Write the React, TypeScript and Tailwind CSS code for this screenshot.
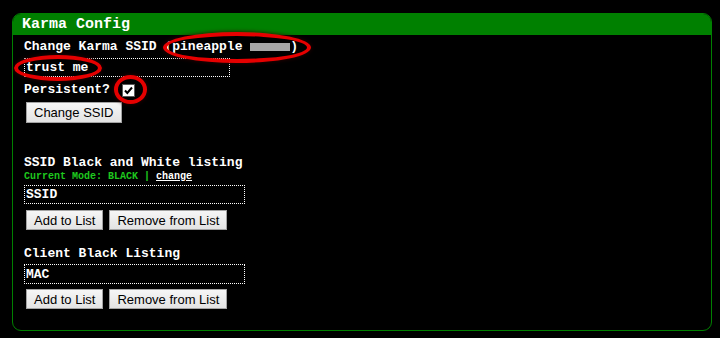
import React from "react";

const mono = "font-['Liberation_Mono','Courier_New',monospace]";
const sans = "font-['Liberation_Sans',Arial,sans-serif]";

function Btn({label}: {label: string}) {
    return (
        <button
            className={`${sans} h-full px-[7px] text-[13px] font-normal leading-none text-black bg-gradient-to-b from-[#f6f6f6] to-[#e3e3e3] border border-[#a3a3a3]`}>
            {label}
        </button>
    );
}

function Field({value, width, height}: {value: string; width: string; height: string}) {
    // dotted white box like the old firefox focus style
    return (
        <div className={`${width} ${height} border border-dotted border-white bg-black pl-[1px] flex items-center`}>
            <span className={`${mono} text-[13px] font-bold text-white leading-none`}>{value}</span>
        </div>
    );
}

export default function App() {
    return (
        <div className="relative w-[720px] h-[338px] bg-black pt-[13px] pl-[12px] overflow-hidden">
            <div className="w-[700px] h-[318px] border border-[#008000] rounded-[9px] overflow-hidden">
                <div className={`${mono} h-[21px] bg-[#008000] px-[9px] text-[15px] font-bold text-white leading-[21px]`}>
                    Karma Config
                </div>

                <div className={`${mono} pl-[11px] text-white font-bold`}>
                    <div className="mt-[4px] h-[16px] text-[13px] leading-[16px] flex items-center whitespace-pre">
                        Change Karma SSID (pineapple <span className="inline-block w-[40px] h-[8px] bg-[#a6a6a6]"/>)
                    </div>
                    <div className="mt-[3px]">
                        <Field value="trust me" width="w-[206px]" height="h-[19px]"/>
                    </div>
                    <div className="mt-[5px] h-[16px] text-[13px] leading-[16px] flex items-center gap-[12px]">
                        Persistent?
                        <span className="w-[13px] h-[13px] bg-white border border-[#5a5a5a] flex items-center justify-center">
                            <svg viewBox="0 0 11 11" className="w-[11px] h-[11px]">
                                <path d="M2 5.5 L4.3 8 L9 2.5" fill="none" stroke="#000" strokeWidth="2"/>
                            </svg>
                        </span>
                    </div>
                    <div className="mt-[4px] h-[21px] ml-[2px] flex">
                        <Btn label="Change SSID"/>
                    </div>

                    <div className="mt-[32px] h-[16px] text-[13px] leading-[16px]">SSID Black and White listing</div>
                    <div className="mt-[1px] h-[10px] text-[10px] leading-[10px] text-[#1ec81e]">
                        Current Mode: BLACK | <span className="text-white underline">change</span>
                    </div>
                    <div className="mt-[3px]">
                        <Field value="SSID" width="w-[221px]" height="h-[19px]"/>
                    </div>
                    <div className="mt-[6px] h-[20px] ml-[2px] flex gap-[6px]">
                        <Btn label="Add to List"/>
                        <Btn label="Remove from List"/>
                    </div>

                    <div className="mt-[16px] h-[16px] text-[13px] leading-[16px]">Client Black Listing</div>
                    <div className="mt-[2px]">
                        <Field value="MAC" width="w-[221px]" height="h-[20px]"/>
                    </div>
                    <div className="mt-[5px] h-[20px] ml-[2px] flex gap-[6px]">
                        <Btn label="Add to List"/>
                        <Btn label="Remove from List"/>
                    </div>
                </div>
            </div>

            {/* red annotation rings drawn over the screenshot */}
            <div className="absolute left-[163px] top-[32px] w-[148px] h-[31px] rounded-[50%] border-[4px] border-[#e60000] shadow-[0_0_4px_#300]"/>
            <div className="absolute left-[14px] top-[55px] w-[88px] h-[26px] rounded-[50%] border-[4px] border-[#e60000] shadow-[0_0_4px_#300]"/>
            <div className="absolute left-[114px] top-[75px] w-[33px] h-[29px] rounded-[50%] border-[4px] border-[#e60000] shadow-[0_0_4px_#300]"/>
        </div>
    );
}
